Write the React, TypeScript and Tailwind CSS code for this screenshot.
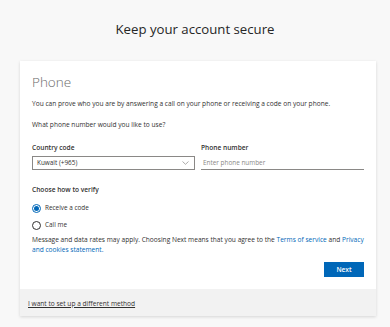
import { useState } from "react";

export default function App() {
  const [method, setMethod] = useState("code");
  const [phone, setPhone] = useState("");

  return (
    <div className="min-h-[327px] w-[390px] bg-[#f8f8f8] font-['Open_Sans',sans-serif] text-[#323130] pt-[21px] pb-[11px]">
      <h1 className="text-center text-[13.2px] leading-[16px] text-[#262626]">Keep your account secure</h1>

      <div className="mx-[20px] mt-[24px] w-[356px] bg-white shadow-[0_1px_3px_rgba(0,0,0,0.14)]">
        <div className="px-[12px] pt-[13px] pb-[12px]">
          <h2 className="text-[13.5px] leading-[16px] font-light text-[#6b6b6b]">Phone</h2>

          <p className="mt-[9px] text-[6.6px] leading-[10px]">
            You can prove who you are by answering a call on your phone or receiving a code on your phone.
          </p>
          <p className="mt-[11px] text-[6.6px] leading-[10px]">What phone number would you like to use?</p>

          <div className="mt-[13px] flex gap-[6px]">
            <div className="w-[165px]">
              <label className="block text-[6.6px] leading-[10px] font-semibold">Country code</label>
              <div className="mt-[3px] h-[14px] border border-[#8a8886] flex items-center justify-between pl-[4px] pr-[5px]">
                <span className="text-[6.4px] text-[#323130]">Kuwait (+965)</span>
                <svg width="7" height="4" viewBox="0 0 7 4" fill="none">
                  <path d="M0.5 0.5L3.5 3.3L6.5 0.5" stroke="#8a8886" strokeWidth="0.7" />
                </svg>
              </div>
            </div>
            <div className="w-[165px]">
              <label className="block text-[6.6px] leading-[10px] font-semibold">Phone number</label>
              <input
                className="mt-[3px] block h-[14px] w-full border-b border-[#8a8886] px-[2px] text-[6.4px] outline-none placeholder:text-[#8a8886]"
                placeholder="Enter phone number"
                value={phone}
                onChange={(e) => setPhone(e.target.value)}
              />
            </div>
          </div>

          <p className="mt-[15px] text-[6.6px] leading-[10px] font-semibold">Choose how to verify</p>

          <div className="mt-[7px] flex flex-col gap-[5px]">
            {[
              { id: "code", label: "Receive a code" },
              { id: "call", label: "Call me" },
            ].map((o) => (
              <button key={o.id} onClick={() => setMethod(o.id)} className="flex h-[12px] items-center gap-[4px] text-[6.4px] leading-[12px]">
                <span
                  className={
                    method === o.id
                      ? "flex h-[9px] w-[9px] items-center justify-center rounded-full border border-[#0067b8]"
                      : "flex h-[9px] w-[9px] items-center justify-center rounded-full border border-[#323130]"
                  }
                >
                  {method === o.id && <span className="h-[5px] w-[5px] rounded-full bg-[#0067b8]" />}
                </span>
                {o.label}
              </button>
            ))}
          </div>

          <p className="mt-[4px] text-[6.6px] leading-[10px]">
            Message and data rates may apply. Choosing Next means that you agree to the{" "}
            <a className="text-[#0067b8]">Terms of service</a> and{" "}
            <a className="text-[#0067b8]">Privacy and cookies statement.</a>
          </p>

          <div className="mt-[7px] flex justify-end">
            <button className="h-[15px] w-[40px] bg-[#0067b8] text-[6.6px] leading-[15px] font-semibold text-white">Next</button>
          </div>
        </div>

        <div className="bg-[#f2f2f2] px-[8px] pt-[10px] pb-[7px] text-[6.6px] leading-[10px]">
          <a className="block w-fit text-[#323130] underline">I want to set up a different method</a>
        </div>
      </div>
    </div>
  );
}
